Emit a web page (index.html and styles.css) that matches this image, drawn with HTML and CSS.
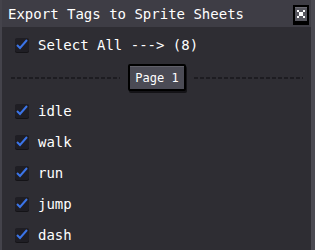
FILE: index.html
```html
<!DOCTYPE html>
<html lang="en">
<head>
<meta charset="UTF-8" />
<title>Export Tags to Sprite Sheets</title>
<link rel="stylesheet" href="styles.css">
</head>
<body>

<div class="dialog">
  <!-- Title bar -->
  <div class="titlebar">
    <span class="title">Export Tags to Sprite Sheets</span>
    <svg class="close" viewBox="0 0 16 20" width="16" height="20">
      <rect x="0" y="0" width="16" height="20" fill="#000" />
      <rect x="2" y="2" width="12" height="14" fill="#56565e" />
      <rect x="2" y="2" width="12" height="1" fill="#6c6c74" />
      <g fill="#fff">
        <rect x="4" y="5" width="2" height="2" />
        <rect x="10" y="5" width="2" height="2" />
        <rect x="6" y="7" width="2" height="2" />
        <rect x="8" y="7" width="2" height="2" />
        <rect x="6" y="9" width="4" height="2" />
        <rect x="4" y="11" width="2" height="2" />
        <rect x="10" y="11" width="2" height="2" />
      </g>
    </svg>
  </div>

  <div class="content">
    <label class="row">
      <svg class="check" viewBox="0 0 14 14"><rect width="14" height="14" rx="2" fill="#1f1e24"/><path d="M2 7 L5 10 L12 2" fill="none" stroke="#3b74e8" stroke-width="2"/></svg>
      <span class="label">Select All ---&gt; (8)</span>
    </label>

    <div class="separator">
      <span class="dashes"></span>
      <button class="page-btn">Page 1</button>
      <span class="dashes"></span>
    </div>

    <label class="row">
      <svg class="check" viewBox="0 0 14 14"><rect width="14" height="14" rx="2" fill="#1f1e24"/><path d="M2 7 L5 10 L12 2" fill="none" stroke="#3b74e8" stroke-width="2"/></svg>
      <span class="label">idle</span>
    </label>
    <label class="row">
      <svg class="check" viewBox="0 0 14 14"><rect width="14" height="14" rx="2" fill="#1f1e24"/><path d="M2 7 L5 10 L12 2" fill="none" stroke="#3b74e8" stroke-width="2"/></svg>
      <span class="label">walk</span>
    </label>
    <label class="row">
      <svg class="check" viewBox="0 0 14 14"><rect width="14" height="14" rx="2" fill="#1f1e24"/><path d="M2 7 L5 10 L12 2" fill="none" stroke="#3b74e8" stroke-width="2"/></svg>
      <span class="label">run</span>
    </label>
    <label class="row">
      <svg class="check" viewBox="0 0 14 14"><rect width="14" height="14" rx="2" fill="#1f1e24"/><path d="M2 7 L5 10 L12 2" fill="none" stroke="#3b74e8" stroke-width="2"/></svg>
      <span class="label">jump</span>
    </label>
    <label class="row">
      <svg class="check" viewBox="0 0 14 14"><rect width="14" height="14" rx="2" fill="#1f1e24"/><path d="M2 7 L5 10 L12 2" fill="none" stroke="#3b74e8" stroke-width="2"/></svg>
      <span class="label">dash</span>
    </label>
  </div>
</div>

</body>
</html>
```

FILE: styles.css
```css
body {
  margin: 0;
  background: #2e2d33;
  font-family: 'DejaVu Sans Mono', monospace;
  color: #fff;
}
.dialog {
  width: 315px;
  height: 250px;
  overflow: hidden;
  background: #2e2d33;
  box-sizing: border-box;
  border-left: 2px solid #44434b;
  border-right: 4px solid #4a4951;
}
.titlebar {
  height: 27px;
  background: #3e3d45;
  display: flex;
  align-items: center;
  justify-content: space-between;
  padding: 0 3px 0 6px;
  margin-left: -2px;
  margin-right: -1px;
  border-left: 2px solid #34333a;
}
.title {
  font-size: 14px;
  line-height: 27px;
  padding-top: 1px;
}
.close {
  display: block;
  margin-top: 3px;
}
.content {
  padding-top: 2px;
}
.row {
  display: flex;
  align-items: center;
  height: 31px;
  padding-left: 13px;
  gap: 9px;
}
.check {
  display: block;
  width: 14px;
  height: 14px;
  filter: drop-shadow(0 1px 0 #141317);
}
.label {
  font-size: 14px;
}
.separator {
  display: flex;
  align-items: center;
  height: 35px;
  gap: 8px;
  padding: 0 8px 0 9px;
}
.dashes {
  flex: 1;
  height: 2px;
  background: repeating-linear-gradient(90deg, #1d1c21 0 4px, transparent 4px 6px);
}
.page-btn {
  width: 58px;
  height: 27px;
  padding: 0;
  font-family: 'DejaVu Sans Mono', monospace;
  font-size: 12px;
  color: #fff;
  background: #4b4b55;
  border: 2px solid #000;
  border-radius: 2px;
  box-shadow: inset 0 1px 0 #606069, 1px 2px 0 #141317;
}
```
